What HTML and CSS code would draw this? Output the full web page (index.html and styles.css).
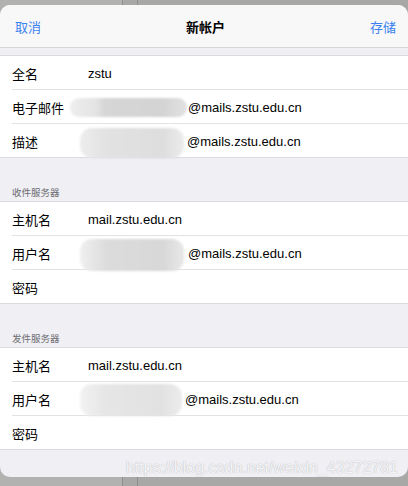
FILE: index.html
```html
<!DOCTYPE html>
<html lang="zh-CN">
<head>
    <meta charset="UTF-8">
    <meta name="viewport" content="width=device-width, initial-scale=1.0">
    <title>新帐户</title>
    <link rel="stylesheet" href="styles.css">
</head>
<body>
    <div class="backdrop"></div>

    <div class="sheet">
        <div class="navbar">
            <span class="nav-btn">取消</span>
            <span class="nav-title">新帐户</span>
            <span class="nav-btn">存储</span>
        </div>

        <div class="gap"></div>

        <div class="section">
            <div class="row">
                <span class="label">全名</span>
                <span class="value">zstu</span>
            </div>
            <div class="row">
                <span class="label">电子邮件</span>
                <span class="value"><span class="blur blur-mail"></span>@mails.zstu.edu.cn</span>
            </div>
            <div class="row">
                <span class="label">描述</span>
                <span class="value"><span class="blur blur-desc"></span>@mails.zstu.edu.cn</span>
            </div>
        </div>

        <div class="section-header">收件服务器</div>
        <div class="section">
            <div class="row">
                <span class="label">主机名</span>
                <span class="value">mail.zstu.edu.cn</span>
            </div>
            <div class="row">
                <span class="label">用户名</span>
                <span class="value"><span class="blur blur-user"></span>@mails.zstu.edu.cn</span>
            </div>
            <div class="row">
                <span class="label">密码</span>
                <span class="value"></span>
            </div>
        </div>

        <div class="section-header">发件服务器</div>
        <div class="section">
            <div class="row">
                <span class="label">主机名</span>
                <span class="value">mail.zstu.edu.cn</span>
            </div>
            <div class="row">
                <span class="label">用户名</span>
                <span class="value"><span class="blur blur-user2"></span>@mails.zstu.edu.cn</span>
            </div>
            <div class="row">
                <span class="label">密码</span>
                <span class="value"></span>
            </div>
        </div>

        <div class="watermark">https://blog.csdn.net/weixin_43272781</div>
    </div>
</body>
</html>
```

FILE: styles.css
```css
body {
    margin: 0;
    height: 486px;
    overflow: hidden;
    font-family: "Liberation Sans", "Noto Sans CJK SC", sans-serif;
    background:
        linear-gradient(90deg, transparent 122px, #8f908e 122px, #8f908e 123px, transparent 123px, transparent 137px, #8f908e 137px, #8f908e 138px, transparent 138px),
        linear-gradient(90deg, #b2b3b1 122px, #a8a9a7 122px);
}
.backdrop {
    height: 5px;
}
.sheet {
    position: relative;
    height: 472px;
    background: #efeff4;
    border-radius: 10px;
    overflow: hidden;
}
.navbar {
    height: 42px;
    display: flex;
    align-items: center;
    justify-content: space-between;
    padding: 0 12px 0 15px;
    background: #f8f8f8;
    border-bottom: 1px solid #d6d6da;
    font-size: 13px;
}
.nav-btn {
    color: #3b82f0;
}
.nav-title {
    color: #000;
    font-weight: bold;
}
.gap {
    height: 7px;
}
.section {
    background: #fff;
    border-top: 1px solid #dcdce0;
    border-bottom: 1px solid #dcdce0;
}
.row {
    height: 31px;
    padding-top: 2px;
    margin-left: 12px;
    display: flex;
    align-items: center;
    font-size: 13px;
    color: #000;
}
.row + .row {
    border-top: 1px solid #e2e2e6;
}
.label {
    width: 76px;
    flex-shrink: 0;
}
.value {
    display: flex;
    align-items: center;
}
.blur {
    display: inline-block;
    border-radius: 12px;
    background: linear-gradient(90deg, #ececec, #dadada 25%, #d6d6d6 80%, #e6e6e6);
    filter: blur(1px);
}
.blur-mail {
    width: 117px;
    height: 19px;
    margin-left: -18px;
    margin-right: 1px;
    border-radius: 9px;
    background: linear-gradient(90deg, #eeeeee, #e4e4e4 22%, #d6d6d6 30%, #d4d4d4 80%, #e2e2e2);
}
.blur-desc {
    width: 104px;
    height: 30px;
    margin-left: -8px;
    margin-right: 3px;
    margin-top: 2px;
    background: linear-gradient(90deg, #ededed, #e2e2e2 25%, #dedede 80%, #ebebeb);
}
.blur-user {
    width: 104px;
    height: 32px;
    margin-left: -8px;
    margin-right: 4px;
    margin-top: 2px;
    background: linear-gradient(90deg, #f0f0f0, #dcdcdc 25%, #d8d8d8 80%, #e8e8e8);
}
.blur-user2 {
    width: 102px;
    height: 32px;
    margin-left: -8px;
    margin-right: 3px;
    background: linear-gradient(90deg, #f2f2f2, #e6e6e6 25%, #e2e2e2 80%, #ececec);
}
.section-header {
    height: 43px;
    box-sizing: border-box;
    display: flex;
    align-items: flex-end;
    padding: 0 0 2px 12px;
    font-size: 9.5px;
    line-height: 12px;
    color: #6d6d72;
}
.watermark {
    position: absolute;
    right: 10px;
    bottom: -1px;
    font-size: 16px;
    line-height: 20px;
    color: #f4f4f6;
    text-shadow: 0 0 1px #bdbdc2, 0 0 1px #cfcfd3;
}
```
